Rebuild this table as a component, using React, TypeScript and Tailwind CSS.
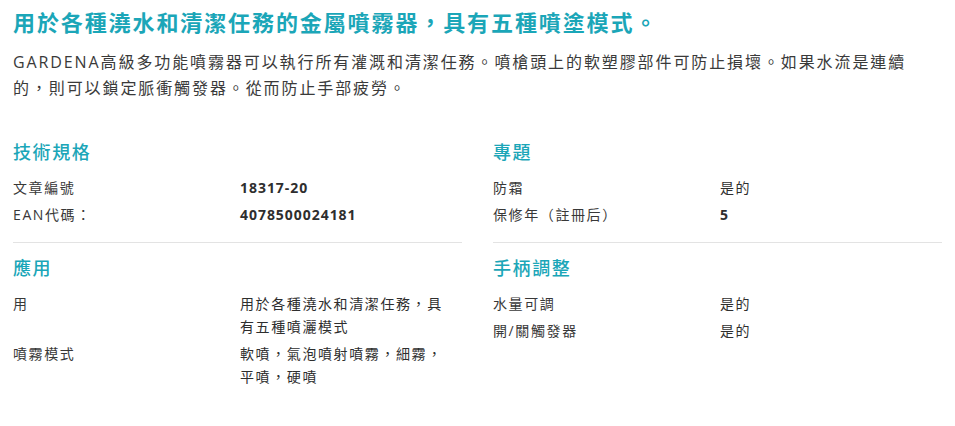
const specs = [
  {
    title: '技術規格',
    rows: [
      { label: '文章編號', value: '18317-20', bold: true },
      { label: 'EAN代碼：', value: '4078500024181', bold: true },
    ],
    divider: true,
  },
  {
    title: '專題',
    rows: [
      { label: '防霜', value: '是的' },
      { label: '保修年（註冊后）', value: '5', bold: true },
    ],
    divider: true,
  },
  {
    title: '應用',
    rows: [
      { label: '用', value: '用於各種澆水和清潔任務，具有五種噴灑模式' },
      { label: '噴霧模式', value: '軟噴，氣泡噴射噴霧，細霧，平噴，硬噴' },
    ],
    divider: false,
  },
  {
    title: '手柄調整',
    rows: [
      { label: '水量可調', value: '是的' },
      { label: '開/關觸發器', value: '是的' },
    ],
    divider: false,
  },
];

type Row = { label: string; value: string; bold?: boolean };

function Section({ title, rows, divider }: { title: string; rows: Row[]; divider: boolean }) {
  return (
    <div className={divider ? 'border-b border-[#e3e3e3] pb-[14px]' : ''}>
      {/* section heading */}
      <h2 className="text-[18px] leading-[24px] font-medium text-[#1ba6b8] mb-[10px]">{title}</h2>
      <div>
        {rows.map((r, i) => (
          <div key={i} className="grid grid-cols-[227px_1fr] py-[2px] text-[14px] leading-[23px]">
            <div className="text-[#383838]">{r.label}</div>
            <div className={r.bold ? 'font-bold text-[#2e2e2e] pr-[14px] tracking-[0.06rem]' : 'text-[#2e2e2e] pr-[14px]'}>
              {r.value}
            </div>
          </div>
        ))}
      </div>
    </div>
  );
}

export default function App() {
  return (
    <main
      className="min-h-screen bg-white px-[13px] pt-[7px] tracking-[0.1rem] text-[#333]"
      style={{ fontFamily: '"Open Sans", "Noto Sans CJK TC", sans-serif' }}
    >
      <h1 className="text-[22px] leading-[30px] font-bold text-[#1ba6b8] tracking-[1.9px]">
        用於各種澆水和清潔任務的金屬噴霧器，具有五種噴塗模式。
      </h1>
      <p className="mt-[12px] text-[16px] leading-[26px] text-[#3a3a3a] max-w-[915px] tracking-[1.9px]">
        GARDENA高級多功能噴霧器可以執行所有灌溉和清潔任務。噴槍頭上的軟塑膠部件可防止損壞。如果水流是連續的，則可以鎖定脈衝觸發器。從而防止手部疲勞。
      </p>

      <div className="mt-[39px] grid grid-cols-2 gap-x-[31px] gap-y-[13px] w-[929px]">
        {specs.map((s) => (
          <Section key={s.title} title={s.title} rows={s.rows} divider={s.divider} />
        ))}
      </div>
    </main>
  );
}
